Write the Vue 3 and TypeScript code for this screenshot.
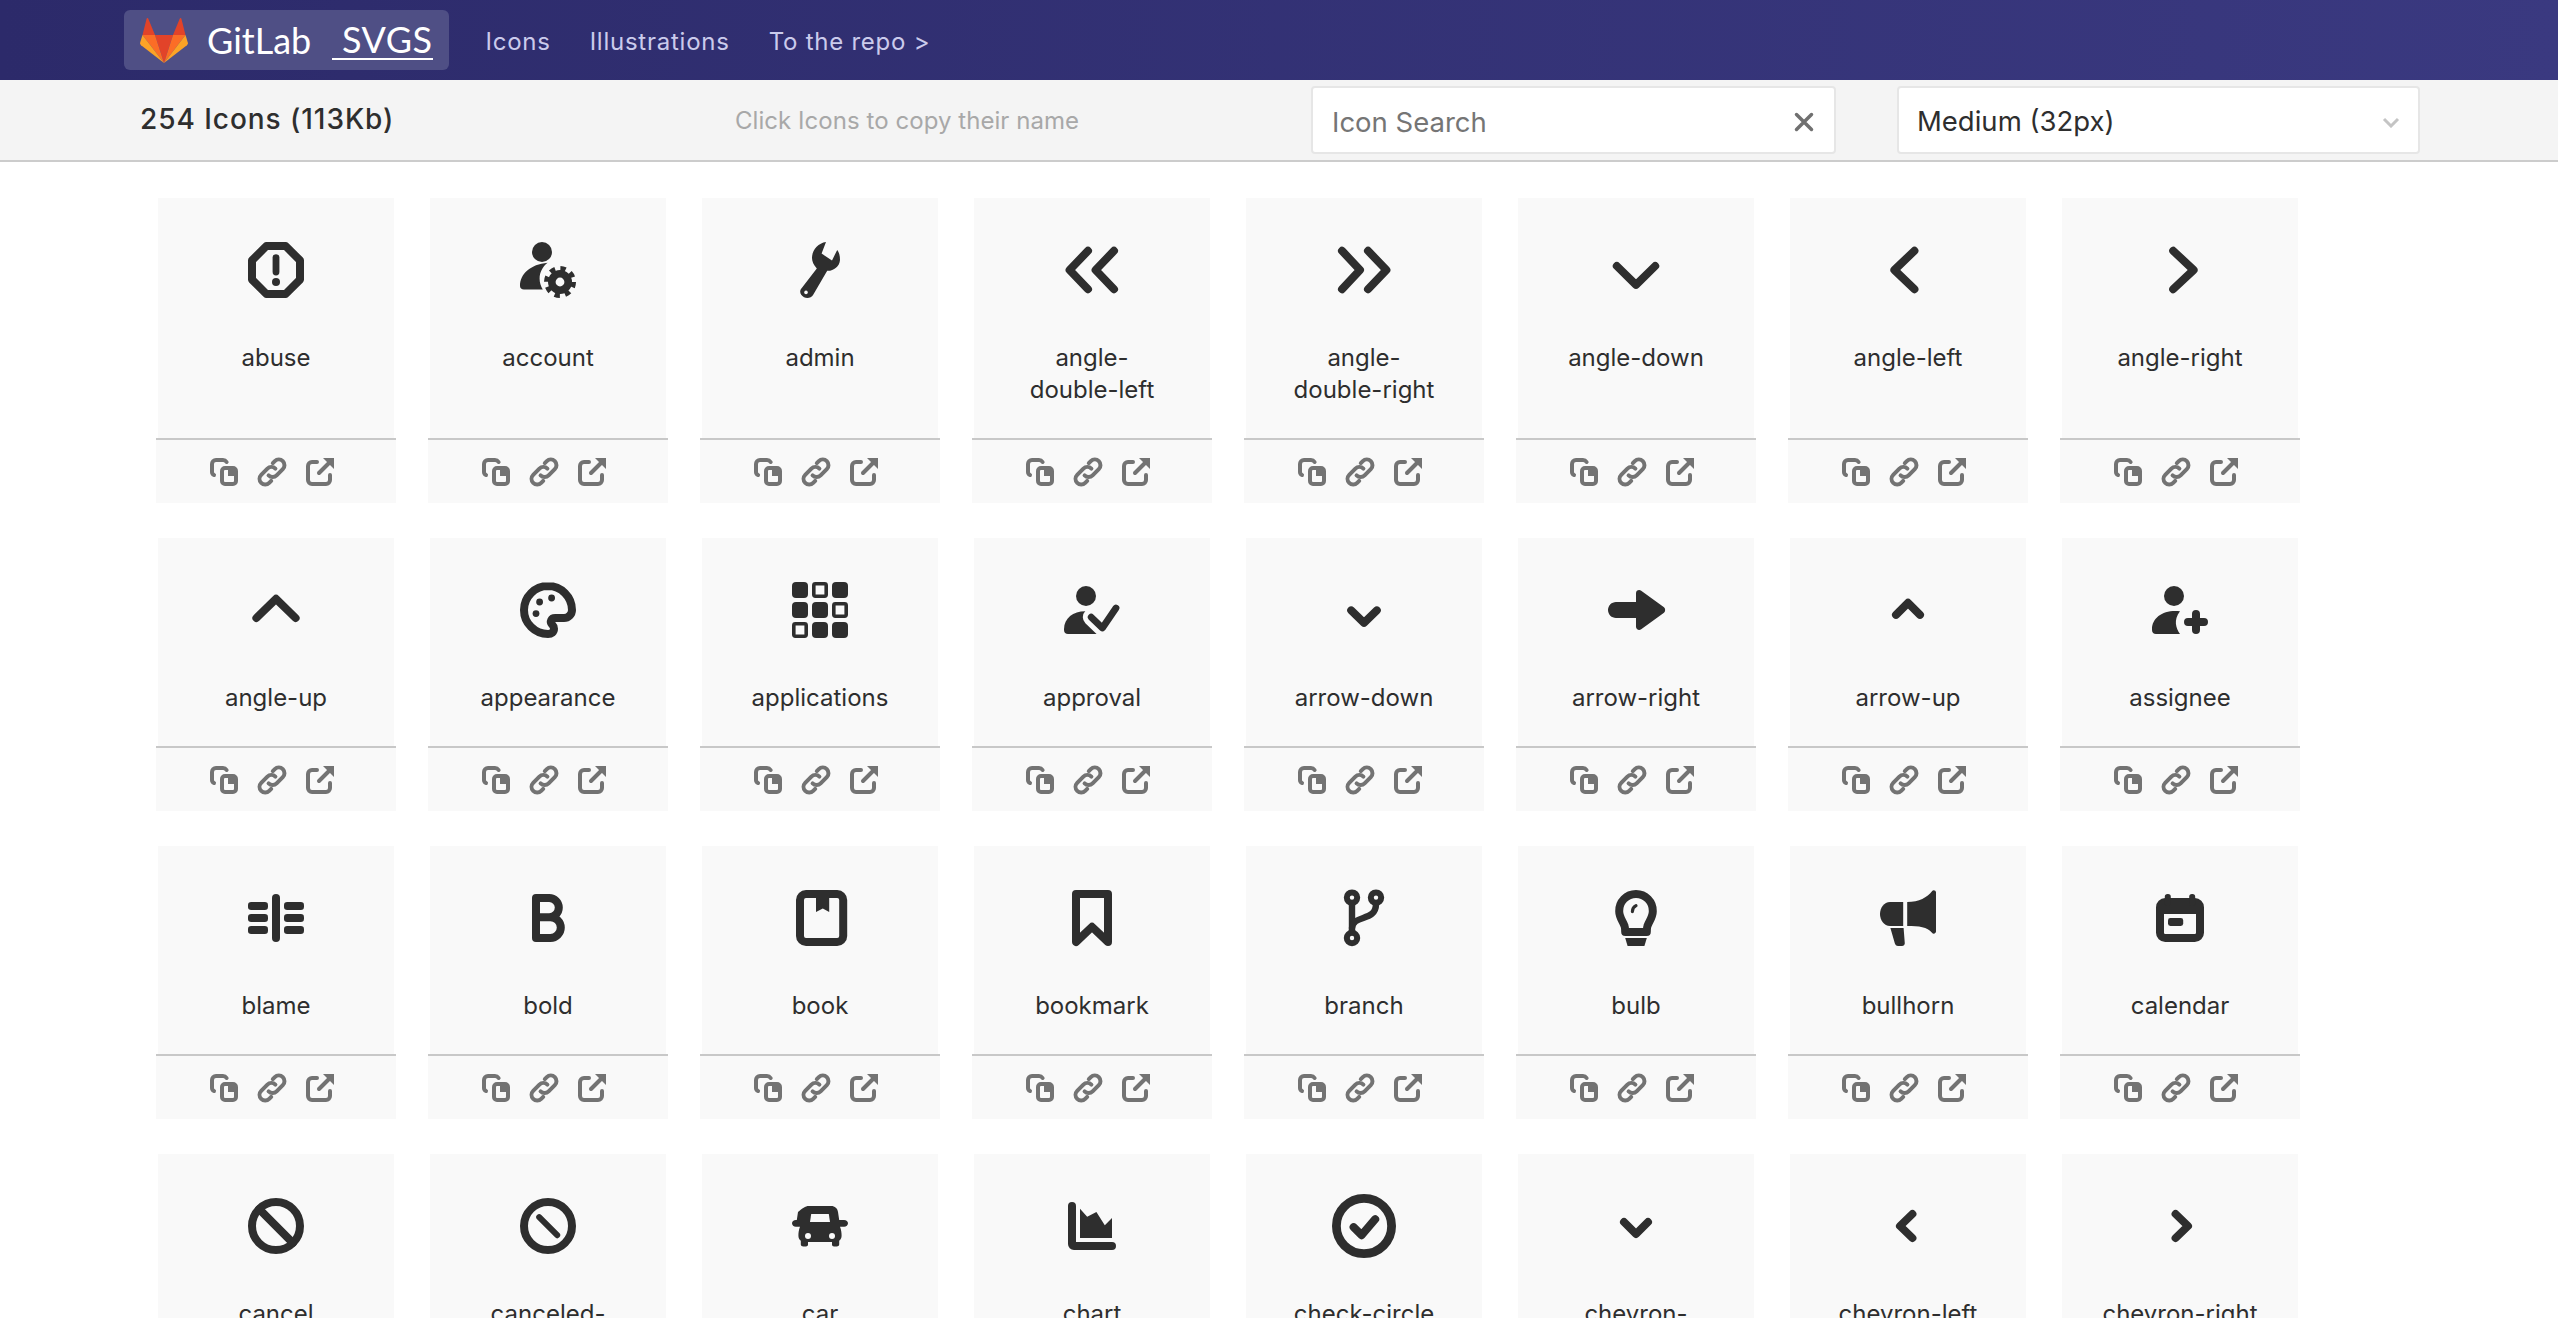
<script setup lang="ts">
import { ref } from "vue";

// helpers for the 16x16 icon bodies
const line = (d: string, w = 2) =>
    `<path d="${d}" fill="none" stroke="currentColor" stroke-width="${w}" stroke-linecap="round" stroke-linejoin="round"/>`;
const fill = (d: string) => `<path d="${d}" fill="currentColor"/>`;
const dot = (x: number, y: number, r: number) => `<circle cx="${x}" cy="${y}" r="${r}" fill="currentColor"/>`;
const hole = (x: number, y: number, r: number) => `<circle cx="${x}" cy="${y}" r="${r}" fill="#f9f9f9"/>`;
const box = (x: number, y: number, w: number, h: number, r = 1) =>
    `<rect x="${x}" y="${y}" width="${w}" height="${h}" rx="${r}" fill="currentColor"/>`;
const hollow = (x: number, y: number) =>
    `<rect x="${x + 0.45}" y="${y + 0.45}" width="3.1" height="3.1" rx=".4" fill="none" stroke="currentColor" stroke-width=".9"/>`;

const ring = `<circle cx="8" cy="8" r="6" fill="none" stroke="currentColor" stroke-width="2"/>`;

const icons: { name: string; body: string }[] = [
    { name: "abuse", body: line("M5.6 2h4.800L14 5.600v4.800L10.400 14H5.600L2 10.400V5.600z") + line("M8 4.900v3.600", 1.7) + dot(8, 11, 1) },
    {
        name: "account",
        body:
            dot(6.5, 3.5, 2.5) +
            fill("M1 12c0-3 2.600-5.400 6.900-5.800-1.300 1-2 2.500-2 3.900 0 1 .3 1.900.8 2.800H2c-.6 0-1-.4-1-.9z") +
            `<circle cx="11" cy="11" r="2.050" fill="none" stroke="currentColor" stroke-width="1.900"/>` +
            `<circle cx="11" cy="11" r="3.400" fill="none" stroke="currentColor" stroke-width="1.200" stroke-dasharray="1.335 1.335"/>`,
    },
    {
        name: "admin",
        body:
            fill("M9.500 1 8.400 3.900 11 5.600 12.300 3c.5.6.7 1.500.7 2.500-.1 1.700-1.700 2.800-3.200 2.700L6.300 14.200c-.5.8-1.500 1-2.300.6-.8-.4-1.200-1.300-.8-2L7.200 7.600C6.400 6.800 6 5.800 6 5c0-2 1.500-3.700 3.500-4z") +
            hole(4.5, 13.6, 0.45),
    },
    { name: "angle-double-left", body: line("M7 3.200 2.400 8 7 12.800") + line("M13.500 3.200 8.900 8l4.600 4.800") },
    { name: "angle-double-right", body: line("M2.500 3.200 7 8l-4.500 4.800") + line("M9 3.200 13.600 8 9 12.800") },
    { name: "angle-down", body: line("M3.200 7 8 11.700 12.800 7") },
    { name: "angle-left", body: line("M9.600 3.200 4.600 8l5 4.800") },
    { name: "angle-right", body: line("M6.300 3.200 11.400 8l-5.100 4.800") },
    { name: "angle-up", body: line("M3.100 10 8 5.200l4.900 4.800") },
    {
        name: "appearance",
        body:
            line("M8 2C4.700 2 2 4.700 2 8s2.700 6 6 6c.9 0 1.500-.5 1.500-1.300 0-.4-.2-.8-.5-1.100-.6-.7-.2-1.600.8-1.600H12c1.100 0 2-.9 2-2 0-3.300-2.700-6-6-6z") +
            dot(5.9, 6, 0.85) +
            dot(8.9, 5, 0.85) +
            dot(5, 8.9, 0.85),
    },
    {
        name: "applications",
        body:
            box(1, 1, 4, 4) + hollow(6, 1) + box(11, 1, 4, 4) +
            box(1, 6, 4, 4) + box(6, 6, 4, 4) + hollow(11, 6) +
            hollow(1, 11) + box(6, 11, 4, 4) + box(11, 11, 4, 4),
    },
    {
        name: "approval",
        body:
            dot(6.5, 4.5, 2.5) +
            fill("M1 12.800C1 10 3.300 8.300 6.300 8.300s5.200 1.700 5.200 4.500v.2c0 .6-.4 1-1 1H2c-.6 0-1-.4-1-1z") +
            `<path d="M7.800 9.800l2.800 2.700L14 7.500" fill="none" stroke="#f9f9f9" stroke-width="4.200" stroke-linecap="round" stroke-linejoin="round"/>` +
            line("M7.800 9.800l2.800 2.700L14 7.500", 1.7),
    },
    { name: "arrow-down", body: line("M4.800 8.100 8 11.200l3.200-3.100") },
    {
        name: "arrow-right",
        body: fill("M3 6h5V3.800c0-.7.800-1 1.300-.6L15 7.300c.4.4.4 1 0 1.400l-5.700 4.100c-.5.4-1.300.1-1.300-.6V10H3c-1.100 0-2-.9-2-2s.9-2 2-2z"),
    },
    { name: "arrow-up", body: line("M5 9.200l3-3 3 3") },
    {
        name: "assignee",
        body:
            dot(6.5, 4.5, 2.5) +
            fill("M8 8.300C4 7.800 1 9.800 1 12.800v.2c0 .6.4 1 1 1h6c-1-1.500-1.700-3.500 0-5.700z") +
            line("M12 9v4M10 11h4"),
    },
    {
        name: "blame",
        body:
            line("M8 3v10") +
            box(1, 4, 5, 2, 0.8) + box(1, 7, 5, 2, 0.8) + box(1, 10, 5, 2, 0.8) +
            box(10, 4, 5, 2, 0.8) + box(10, 7, 5, 2, 0.8) + box(10, 10, 5, 2, 0.8),
    },
    { name: "bold", body: line("M5 3h3.300a2.400 2.400 0 0 1 0 4.800H5zM5 7.800h3.600a2.600 2.600 0 0 1 0 5.200H5z") },
    {
        name: "book",
        body:
            `<rect x="3" y="2" width="10.800" height="12" rx="1.500" fill="none" stroke="currentColor" stroke-width="2"/>` +
            fill("M7 2h3.300v4.500l-1.600-.9L7 6.500z"),
    },
    { name: "bookmark", body: line("M4 2h8v12l-4-3.800L4 14z") },
    {
        name: "branch",
        body:
            `<g fill="none" stroke="currentColor" stroke-width="1.500"><circle cx="5" cy="2.900" r="1.300"/><circle cx="11" cy="2.900" r="1.300"/><circle cx="5" cy="13" r="1.300"/></g>` +
            line("M5 4.500v7", 1.600) +
            line("M11 4.500c0 4.500-5.700 2.500-6 6", 1.600),
    },
    {
        name: "bulb",
        body:
            line("M8 2a4.200 4.200 0 0 0-4.200 4.300c0 1.500.9 2.500 1.300 3.600.2.500.2 1.100.2 1.600h5.400c0-.5 0-1.100.2-1.600.4-1.100 1.300-2.100 1.300-3.600A4.200 4.200 0 0 0 8 2z") +
            line("M7.100 6.400c0-.7.3-1.200.9-1.500", 0.8) +
            fill("M5.300 13h5.400l-.6 2H5.900z"),
    },
    {
        name: "bullhorn",
        body:
            fill("M7.800 4c3 0 5-1.200 6.200-2.700.3-.4 1-.2 1 .3v9.800c0 .5-.7.7-1 .3-1.200-1.500-3.200-1.700-6.200-1.700z") +
            fill("M6.800 4v6H3.500C2 10 1 8.500 1 7s1-3 2.500-3z") +
            fill("M3.600 10.500h3.300l.3 3.800c0 .4-.3.7-.7.700h-1c-.4 0-.7-.3-.8-.7z"),
    },
    {
        name: "calendar",
        body:
            `<rect x="3" y="4" width="10" height="9" rx="1.300" fill="none" stroke="currentColor" stroke-width="2"/>` +
            box(3, 3.500, 10, 3.500, 0.5) +
            box(4.200, 2, 1.500, 3, 0.7) + box(10.300, 2, 1.500, 3, 0.7) +
            box(5, 8, 3.800, 2, 0.6),
    },
    { name: "cancel", body: ring + line("M3.800 3.800l8.400 8.400") },
    { name: "canceled-circle", body: ring + line("M5.800 5.800l4.500 4.500", 1.500) },
    {
        name: "car",
        body:
            fill("M5.200 3h5.600c.9 0 1.600.6 1.700 1.500l.3 2H14c.6 0 1 .4 1 .8s-.4.9-1 .9h-1c.3.8.4 1.500.4 2.200 0 .6-.2 1-.6 1.300v.9c0 .3-.3.500-.6.500h-.7c-.3 0-.5-.2-.5-.5V12H5v.6c0 .3-.2.500-.5.500h-.7c-.3 0-.6-.2-.6-.5v-.9c-.4-.3-.6-.7-.6-1.300 0-.7.1-1.400.4-2.200H2c-.6 0-1-.5-1-.9s.4-.8 1-.8h.200l.3-2C3.600 3.600 4.300 3 5.200 3z") +
            `<path d="M5.800 5h4.400l.3 2H5.500z" fill="#f9f9f9"/>` +
            hole(5, 10.500, 0.75) +
            hole(11, 10.500, 0.75),
    },
    {
        name: "chart",
        body: line("M3 3v9.500c0 .3.200.5.500.5H13") + fill("M5 3.700l1.800 2 2.300-1.200 2.100 3.300L13 6v5H5z"),
    },
    {
        name: "check-circle",
        body:
            `<circle cx="8" cy="8" r="6.900" fill="none" stroke="currentColor" stroke-width="2.200"/>` +
            line("M5.400 8.300l2 2 3.400-4"),
    },
    { name: "chevron-down", body: line("M5 7l3 3 3-3") },
    { name: "chevron-left", body: line("M9.100 5 6 8l3.100 3") },
    { name: "chevron-right", body: line("M6.900 5 10 8l-3.100 3") },
];

const search = ref("");
const size = ref("medium");
</script>

<template>
    <div class="page">
        <header class="topbar">
            <a class="brand">
                <svg class="tanuki" viewBox="0 0 48 45">
                    <path d="M24 45 15 17h18z" fill="#e24329" />
                    <path d="M24 45 2.500 17H15z" fill="#fc6d26" />
                    <path d="M24 45 33 17h12.500z" fill="#fc6d26" />
                    <path d="M2.500 17 .2 24.500c-.3 1 0 2 .9 2.700L24 45z" fill="#fca326" />
                    <path d="M45.500 17l2.300 7.500c.3 1 0 2-.9 2.700L24 45z" fill="#fca326" />
                    <path d="M2.500 17h12.500L8.300.7c-.3-.9-1.400-.9-1.700 0z" fill="#e24329" />
                    <path d="M45.500 17H33L39.700.7c.3-.9 1.400-.9 1.700 0z" fill="#e24329" />
                </svg>
                <span class="wordmark">GitLab</span>
                <span class="wordmark svgs">&nbsp;SVGS</span>
            </a>
            <nav class="nav">
                <a>Icons</a>
                <a>Illustrations</a>
                <a>To the repo &gt;</a>
            </nav>
        </header>

        <div class="toolbar">
            <strong class="count">254 Icons (113Kb)</strong>
            <span class="hint">Click Icons to copy their name</span>
            <div class="field search">
                <input v-model="search" type="text" placeholder="Icon Search" />
                <svg class="clear" viewBox="0 0 20 20">
                    <path d="M2.500 2.500l15 15M17.500 2.500l-15 15" fill="none" stroke="currentColor" stroke-width="3.500" stroke-linecap="round" />
                </svg>
            </div>
            <div class="field picker">
                <select v-model="size">
                    <option value="medium">Medium (32px)</option>
                </select>
                <svg class="caret" viewBox="0 0 18 11">
                    <path d="M2 2l7 7 7-7" fill="none" stroke="currentColor" stroke-width="3" />
                </svg>
            </div>
        </div>

        <main class="grid">
            <section v-for="icon in icons" :key="icon.name" class="card">
                <div class="card-body">
                    <svg class="glyph" viewBox="0 0 16 16" v-html="icon.body"></svg>
                    <div class="name">{{ icon.name }}</div>
                </div>
                <div class="actions">
                    <svg class="action" viewBox="0 0 16 16">
                        <g fill="none" stroke="currentColor" stroke-width="2" stroke-linecap="round" stroke-linejoin="round">
                            <path d="M3 9.500c-.6-.3-1-.9-1-1.500V4c0-1.100.9-2 2-2h3.500c.8 0 1.400.4 1.800 1" />
                            <rect x="7" y="6" width="7" height="8" rx="1.500" />
                        </g>
                        <path d="M10 6h3c.6 0 1 .4 1 1v3h-4z" fill="currentColor" />
                    </svg>
                    <svg class="action" viewBox="0 0 16 16">
                        <g fill="none" stroke="currentColor" stroke-width="2" stroke-linecap="round">
                            <path d="M6.300 9.700c1.100 1.100 2.900 1.100 4 0l3.100-3.100c1.100-1.100 1.100-2.900 0-4s-2.900-1.100-4 0L8.400 3.600" />
                            <path d="M9.700 6.300c-1.100-1.100-2.900-1.100-4 0L2.600 9.400c-1.100 1.100-1.100 2.900 0 4s2.900 1.100 4 0l1-1" />
                        </g>
                    </svg>
                    <svg class="action" viewBox="0 0 16 16">
                        <g fill="none" stroke="currentColor" stroke-width="2" stroke-linecap="round" stroke-linejoin="round">
                            <path d="M6.500 3H4c-1.100 0-2 .9-2 2v7c0 1.100.9 2 2 2h7c1.100 0 2-.9 2-2V9.500" />
                            <path d="M7.500 8.500 12.500 3.500" />
                        </g>
                        <path d="M9.500 1H15v5.500z" fill="currentColor" />
                    </svg>
                </div>
            </section>
        </main>
    </div>
</template>

<style>
html,
body {
    margin: 0;
    overflow: hidden;
    background: #fff;
}
</style>

<style scoped>
.page {
    height: 100vh;
    overflow: hidden;
    font-family: Inter, "Liberation Sans", sans-serif;
    color: #2e2e2e;
}

.topbar {
    height: 80px;
    padding-left: 124px;
    display: flex;
    align-items: center;
    background: linear-gradient(to right, #2c2a6a, #3a3980);
}

.brand {
    height: 60px;
    box-sizing: border-box;
    padding: 0 16px;
    display: flex;
    align-items: center;
    background: #4f4f85;
    border-radius: 6px;
    color: #fff;
}

.tanuki {
    width: 48px;
    height: 45px;
    margin-right: 19px;
}

.wordmark {
    font-family: Lato, sans-serif;
    font-size: 36px;
    line-height: 44px;
}

.svgs {
    margin-left: 21px;
    line-height: 38px;
    letter-spacing: 0.5px;
    border-bottom: 2px solid #fff;
}

.nav {
    margin-left: 37px;
    padding-top: 2px;
    display: flex;
    gap: 39px;
    font-size: 24px;
    letter-spacing: 0.75px;
    color: #cbcbec;
}

.toolbar {
    height: 80px;
    padding-left: 140px;
    display: flex;
    align-items: center;
    background: #f4f4f4;
    border-bottom: 2px solid #ccc;
}

.count {
    width: 595px;
    margin-bottom: 2px;
    font-size: 28px;
    font-weight: 500;
    letter-spacing: 0.95px;
}

.hint {
    width: 576px;
    font-size: 24px;
    letter-spacing: 0.05px;
    color: #a8a8a8;
}

.field {
    position: relative;
    height: 68px;
    box-sizing: border-box;
    background: #fff;
    border: 2px solid #e6e6e6;
    border-radius: 4px;
}

.search {
    width: 525px;
}

.picker {
    width: 523px;
    margin-left: 61px;
}

.field input,
.field select {
    width: 100%;
    height: 100%;
    box-sizing: border-box;
    border: none;
    outline: none;
    background: transparent;
    font: 27.5px Inter, "Liberation Sans", sans-serif;
    color: #2e2e2e;
    appearance: none;
}

.field input {
    padding: 4px 60px 0 19px;
}

.field select {
    padding: 1px 50px 0 18px;
}

.field input::placeholder {
    color: #757575;
    opacity: 1;
}

.clear {
    position: absolute;
    top: 24px;
    right: 20px;
    width: 20px;
    height: 20px;
    color: #707070;
}

.caret {
    position: absolute;
    top: 29px;
    right: 18px;
    width: 18px;
    height: 11px;
    color: #c4c4c4;
}

.grid {
    padding: 36px 0 0 158px;
    display: grid;
    grid-template-columns: repeat(8, 236px);
    gap: 35px 36px;
}

.card {
    display: flex;
    flex-direction: column;
    background: #f9f9f9;
}

.card-body {
    flex: 1;
    padding: 40px 40px 32px;
    display: flex;
    flex-direction: column;
    align-items: center;
}

.glyph {
    width: 64px;
    height: 64px;
    flex: none;
    color: #2e2e2e;
}

.name {
    margin-top: 40px;
    width: 156px;
    text-align: center;
    font-size: 24px;
    line-height: 32px;
}

.actions {
    margin: 0 -2px;
    padding: 16px 8px 15px 0;
    display: flex;
    justify-content: center;
    gap: 16px;
    background: #f9f9f9;
    border-top: 2px solid #c8c8c8;
}

.action {
    width: 32px;
    height: 32px;
    color: #737373;
}
</style>
